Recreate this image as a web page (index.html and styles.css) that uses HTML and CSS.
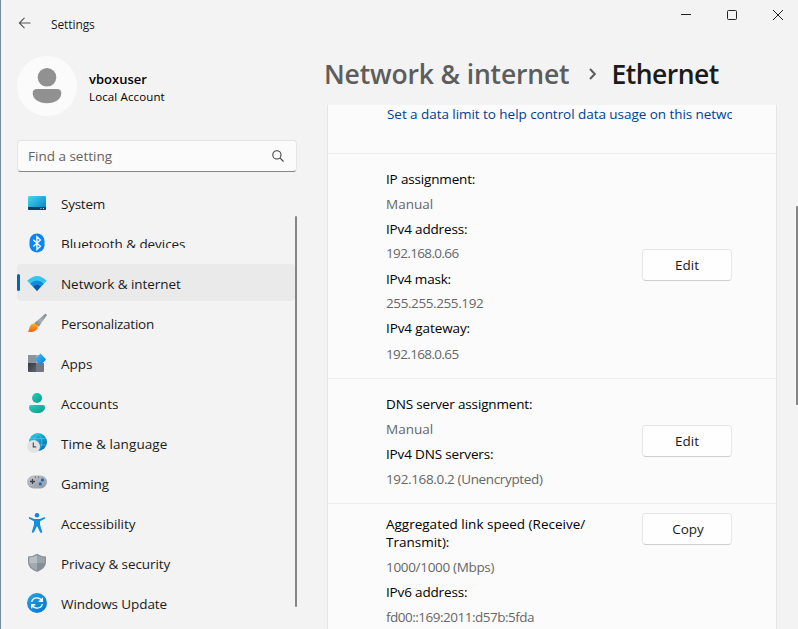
FILE: index.html
```
<!DOCTYPE html>
<html lang="en">
<head>
<meta charset="utf-8">
<title>Settings</title>
<link rel="stylesheet" href="styles.css">
</head>
<body>
<div class="window">
  <header class="titlebar">
    <svg class="back" width="14" height="14" viewBox="0 0 14 14"><path d="M12.5 7H1.5M6.5 1.8 1.3 7l5.2 5.2"/></svg>
    <span class="title">Settings</span>
    <div class="controls">
      <svg width="46" height="30" viewBox="0 0 46 30"><path d="M18 14.5h10"/></svg>
      <svg width="46" height="30" viewBox="0 0 46 30"><rect x="18.5" y="10.500" width="9" height="9" rx="1"/></svg>
      <svg width="46" height="30" viewBox="0 0 46 30"><path d="m18 10 10 10M28 10 18 20"/></svg>
    </div>
  </header>
  <div class="columns">
    <aside class="sidebar">
      <div class="account">
        <svg class="avatar" width="60" height="60" viewBox="0 0 60 60"><circle cx="30" cy="30" r="30" fill="#fbfbfb"/><circle cx="30" cy="21.300" r="9.300" fill="#919191"/><path d="M20 33h20q4.300 0 4.300 4c0 6-6 10.300-14.300 10.300S15.700 43 15.700 37q0-4 4.300-4z" fill="#919191"/></svg>
        <div class="who"><div class="user">vboxuser</div><div class="kind">Local Account</div></div>
      </div>
      <div class="search"><span>Find a setting</span>
        <svg width="12" height="12" viewBox="0 0 12 12"><circle cx="4.900" cy="4.900" r="4.100"/><path d="m7.900 7.900 3.600 3.600"/></svg>
      </div>
      <nav class="nav">
        <a class="item"><svg width="20" height="20" viewBox="0 0 20 20"><defs><linearGradient id="sys" x2="1" y2="1"><stop stop-color="#3fdde9"/><stop offset="1" stop-color="#087ac9"/></linearGradient></defs><rect x="1" y="3" width="18" height="14" rx="1.200" fill="url(#sys)"/><path d="M1 14h18v1.800q0 1.200-1.200 1.200H2.200Q1 17 1 15.800z" fill="#10415e"/><path d="M13.500 15.500h1M16 15.500h1" stroke="#b4dced"/></svg><span class="t-system">System</span></a>
        <a class="item"><svg width="20" height="20" viewBox="0 0 20 20"><rect x="2.500" y=".5" width="15" height="19" rx="7.300" fill="#0786fa"/><path d="m6.300 6.700 7.100 6.500-3.500 3.200V3.800l3.500 3.200-7.100 6.500" fill="none" stroke="#fff" stroke-width="1.300"/></svg><span class="t-bluetooth">Bluetooth &amp; devices</span></a>
        <a class="item selected"><svg width="20" height="20" viewBox="0 0 20 20"><path d="M.2 7.800Q10-2 19.800 7.800L10 17.800z" fill="#36c5f0"/><path d="M3.200 10.800Q10 4 16.800 10.800L10 17.800z" fill="#1789da"/><path d="M6.200 13.600Q10 10 13.800 13.600L10 18z" fill="#0b5aa7"/></svg><span class="t-network">Network &amp; internet</span></a>
        <a class="item"><svg width="20" height="20" viewBox="0 0 20 20"><defs><linearGradient id="handle" x1="1" x2="0" y2="1"><stop stop-color="#7a8189"/><stop offset=".5" stop-color="#a9b0b5"/><stop offset="1" stop-color="#68717b"/></linearGradient><linearGradient id="paint" x2="0" y2="1"><stop stop-color="#ffb31b"/><stop offset="1" stop-color="#ed5e14"/></linearGradient></defs><path d="M18.300.8q1.700.2 1.300 1.800L11.800 13.800 7.200 10.300Z" fill="url(#handle)"/><path d="M6.600 10.500q3.600-.2 4.200 3.900C9 19.500 3 19.600.2 18.300c2.300-.6 1.800-2.200 2.600-4.600q.9-2.800 3.800-3.200z" fill="url(#paint)"/></svg><span class="t-personal">Personalization</span></a>
        <a class="item"><svg width="20" height="20" viewBox="0 0 20 20"><defs><linearGradient id="dark" x2="1" y2="1"><stop stop-color="#36393e"/><stop offset="1" stop-color="#60656c"/></linearGradient><linearGradient id="dia" x2="1" y2="1"><stop stop-color="#42bdf6"/><stop offset="1" stop-color="#087bdc"/></linearGradient></defs><path d="M1 2h8v8H1z" fill="#8c939c"/><path d="M1 10h8v9H2q-1 0-1-1z" fill="url(#dark)"/><path d="M9 10h8v8q0 1-1 1H9z" fill="#727781"/><path d="M9 2h4v8H9z" fill="#a9b0b8"/><path d="m13.500.6 5 5.200q.7.700 0 1.400l-5 5-5-5q-.6-.7 0-1.400z" fill="url(#dia)"/></svg><span class="t-apps">Apps</span></a>
        <a class="item"><svg width="20" height="20" viewBox="0 0 20 20"><defs><linearGradient id="acc" x2="1" y2="1"><stop stop-color="#27cebc"/><stop offset="1" stop-color="#079c8e"/></linearGradient></defs><circle cx="10" cy="5" r="5" fill="url(#acc)"/><path d="M4 12h12q2 0 2 2.200c0 3.500-3 5.800-8 5.800s-8-2.300-8-5.800Q2 12 4 12z" fill="url(#acc)"/></svg><span class="t-accounts">Accounts</span></a>
        <a class="item"><svg width="20" height="20" viewBox="0 0 20 20"><defs><linearGradient id="globe" x2="1" y2="1"><stop stop-color="#2bd1e2"/><stop offset="1" stop-color="#0862b5"/></linearGradient></defs><circle cx="11" cy="9" r="9" fill="url(#globe)"/><path d="M3 5.500h16M2 12h17M11 0Q3 9 11 18M11 0q8 9 0 18" stroke="#64dbec" stroke-opacity=".6" stroke-width=".8" fill="none"/><circle cx="6.500" cy="13.500" r="6.500" fill="#e1e3e5"/><path d="M6.300 9.500v4.300h3" stroke="#4e5155" fill="none" stroke-width="1.200"/></svg><span class="t-time">Time &amp; language</span></a>
        <a class="item"><svg width="20" height="20" viewBox="0 0 20 20"><defs><linearGradient id="pad" x2="1" y2="1"><stop stop-color="#c0c6cb"/><stop offset="1" stop-color="#9299a1"/></linearGradient></defs><rect y="2.500" width="20" height="13" rx="6.500" fill="url(#pad)"/><path d="M5.500 6v5M3 8.500h5" stroke="#3f4348" stroke-width="1.300"/><path d="M8 4h1M11 4h1" stroke="#45494d"/><circle cx="15.500" cy="6.900" r="1.600" fill="#0871cc"/><circle cx="13.300" cy="10.900" r="1.600" fill="#0871cc"/></svg><span class="t-gaming">Gaming</span></a>
        <a class="item"><svg width="20" height="20" viewBox="0 0 20 20"><circle cx="10" cy="2.200" r="2.200" fill="#0e85da"/><path d="M3 4.200 7.300 6h5.400L17 4.200q1.200-.3 1.300.8 0 .7-1 1.100L13 8.200v3.600l2.100 6.600q.2 1.300-.9 1.500-.8 0-1.200-.9L10 13l-3 6q-.5 1-1.400.8-1-.3-.7-1.400L7 11.800V8.200L2.700 6.100q-1-.4-1-1.100Q1.900 3.800 3 4.200z" fill="#138ee2"/></svg><span class="t-access">Accessibility</span></a>
        <a class="item"><svg width="20" height="20" viewBox="0 0 20 20"><path d="M10 .7Q14 3.400 19 3.500v5.800q0 6.300-9 9.600-9-3.300-9-9.600V3.500Q6 3.400 10 .7z" fill="#878f96"/><path d="M10 2.200V10H2.200V4.500Q6.500 4.300 10 2.200z" fill="#b9bec2"/><path d="M10 2.200q3.500 2.100 7.800 2.300V10H10z" fill="#9ca3a9"/><path d="M2.200 10H10v7.600q-7.200-2.900-7.800-7.600z" fill="#a3aaaf"/><path d="M10 10h7.800q-.6 4.700-7.800 7.600z" fill="#858e96"/></svg><span class="t-privacy">Privacy &amp; security</span></a>
        <a class="item"><svg width="20" height="20" viewBox="0 0 20 20"><defs><linearGradient id="upd" x2="1" y2="1"><stop stop-color="#22a3ea"/><stop offset="1" stop-color="#0874cb"/></linearGradient></defs><circle cx="10" cy="10" r="10" fill="url(#upd)"/><path d="M4.700 9Q5.300 5 10 4.900q3 0 5 3M15.300 4.700v3.500h-3.600M15.300 11Q14.700 15 10 15.100q-3 0-5-3M4.700 15.300v-3.500h3.600" stroke="#fff" stroke-width="1.400" fill="none"/></svg><span class="t-update">Windows Update</span></a>
      </nav>
      <div class="side-scroll"></div>
    </aside>
    <main class="content">
      <h1><span class="parent">Network &amp; internet</span><svg width="10" height="14" viewBox="0 0 10 14"><path d="m2 2 4.800 5L2 12"/></svg><span class="current">Ethernet</span></h1>
      <div class="card">
        <section class="row limit"><a class="link">Set a data limit to help control data usage on this network</a></section>
        <section class="row ip">
          <dl>
            <dt class="d-ip">IP assignment:</dt><dd class="d-manual">Manual</dd>
            <dt class="d-addr">IPv4 address:</dt><dd class="d-num raised">192.168.0.66</dd>
            <dt class="d-mask">IPv4 mask:</dt><dd class="d-maskno raised">255.255.255.192</dd>
            <dt class="d-gate raised">IPv4 gateway:</dt><dd class="d-num">192.168.0.65</dd>
          </dl>
          <button>Edit</button>
        </section>
        <section class="row dns">
          <dl>
            <dt class="d-dns">DNS server assignment:</dt><dd class="d-manual">Manual</dd>
            <dt class="d-servers">IPv4 DNS servers:</dt><dd class="d-unenc">192.168.0.2 (Unencrypted)</dd>
          </dl>
          <button>Edit</button>
        </section>
        <section class="row speed">
          <dl>
            <dt class="d-agg">Aggregated link speed (Receive/<br>Transmit):</dt><dd class="d-mbps">1000/1000 (Mbps)</dd>
            <dt class="d-addr">IPv6 address:</dt><dd class="d-v6">fd00::169:2011:d57b:5fda</dd>
          </dl>
          <button>Copy</button>
        </section>
      </div>
      <div class="main-scroll"></div>
    </main>
  </div>
</div>
</body>
</html>
```
FILE: styles.css
```
* { box-sizing: border-box; }
body { margin: 0; height: 629px; overflow: hidden; background: #f3f3f3; color: #1b1b1b; font: 13.5px/18px "Open Sans", "Noto Sans", sans-serif; }
.window { height: 629px; display: flex; flex-direction: column; border-left: 1px solid #788ba3; }
.titlebar { height: 46px; flex: none; display: flex; align-items: center; padding-left: 17px; }
.back { fill: none; stroke: #555; stroke-width: 1.100; }
.title { margin-left: 19px; margin-top: 3px; font-size: 12px; letter-spacing: -.1px; }
.controls { display: flex; margin-left: auto; align-self: flex-start; margin-right: -3px; }
.controls svg { display: block; fill: none; stroke: #222; stroke-width: 1; }
.columns { flex: 1; min-height: 0; display: flex; }
.sidebar { width: 296px; flex: none; padding: 10px 0 0 16px; position: relative; }
.account { display: flex; gap: 12px; align-items: center; color: #000; }
.avatar { display: block; }
.who { padding-top: 4px; }
.user { font-size: 13px; font-weight: 600; }
.kind { font-size: 11.5px; letter-spacing: .13px; }
.search { margin-top: 24px; width: 280px; height: 32px; display: flex; align-items: center; justify-content: space-between; padding: 0 12px 0 10px; background: #fbfbfb; border: 1px solid #e5e5e5; border-bottom-color: #868686; border-radius: 4px; color: #636363; }
.search svg { fill: none; stroke: #444; stroke-width: 1.100; }
.nav { margin-top: 12px; display: flex; flex-direction: column; gap: 3px; }
.item { height: 37px; flex: none; display: flex; align-items: center; gap: 14px; padding: 2px 0 0 10px; width: 278px; position: relative; border-radius: 4px; white-space: nowrap; }
.item svg { flex: none; overflow: visible; margin-bottom: 1px; }
.selected { background: #eaeaea; }
.selected::before { content: ""; position: absolute; left: 0; top: 10px; width: 3px; height: 17px; border-radius: 2px; background: #0067c0; }
.t-system { letter-spacing: -.25px; }
.t-bluetooth { letter-spacing: -.05px; overflow: hidden; height: 13px; margin-bottom: 5px; }
.t-network { letter-spacing: -.06px; }
.t-personal { letter-spacing: -.26px; }
.t-time { letter-spacing: .1px; }
.t-gaming { letter-spacing: -.15px; }
.t-access, .t-privacy, .t-update { letter-spacing: -.08px; }
.side-scroll { position: absolute; left: 294px; top: 170px; width: 2px; height: 391px; background: #868686; border-radius: 1px; }
.content { flex: 1; min-width: 0; position: relative; display: flex; flex-direction: column; padding: 11px 21px 0 30px; }
h1 { margin: 0 0 14px -3px; height: 34px; display: flex; align-items: center; font-size: 26.5px; line-height: 34px; font-weight: 600; white-space: nowrap; }
h1 svg { margin: 0 13px 0 19px; fill: none; stroke: #5d5d5d; stroke-width: 2; }
.parent { color: #5d5d5d; letter-spacing: -.16px; }
.current { letter-spacing: -.5px; }
.card { flex: 1; min-height: 0; overflow: hidden; width: 450px; background: #fbfbfb; border: solid #e5e5e5; border-width: 0 1px; }
.row { display: flex; align-items: center; justify-content: space-between; padding: 16px 44px 15px 58px; border-bottom: 1px solid #ededed; }
.limit { height: 49px; align-items: flex-start; padding-top: 0; }
.link { color: #003e92; overflow: hidden; white-space: nowrap; margin-left: 1px; letter-spacing: -.05px; }
dl { margin: 0; display: flex; flex-direction: column; gap: 7px; white-space: nowrap; }
dt { color: #000; }
dd { margin: 0; color: #676767; }
.raised { margin: -1px 0 1px; }
.d-ip, .d-addr, .d-dns, .d-servers { letter-spacing: -.16px; }
.d-mask { letter-spacing: -.2px; }
.d-gate { letter-spacing: -.1px; }
.d-num { letter-spacing: -.63px; }
.d-maskno { letter-spacing: -.4px; }
.d-unenc { letter-spacing: -.36px; }
.d-mbps { letter-spacing: -.32px; }
.d-v6 { letter-spacing: -.5px; }
.speed { align-items: flex-start; padding-top: 11px; }
button { width: 90px; height: 32px; flex: none; padding: 0; background: #fefefe; border: 1px solid #e7e7e7; border-bottom-color: #cfcfcf; border-radius: 4px; font: inherit; color: #1b1b1b; }
.ip button { margin-bottom: 4px; }
.dns button { margin-bottom: 2px; }
.speed button { margin-top: -2px; padding-left: 2px; }
.main-scroll { position: absolute; right: 0; top: 160px; width: 2px; height: 199px; background: #868686; border-radius: 1px 0 0 1px; }
```
